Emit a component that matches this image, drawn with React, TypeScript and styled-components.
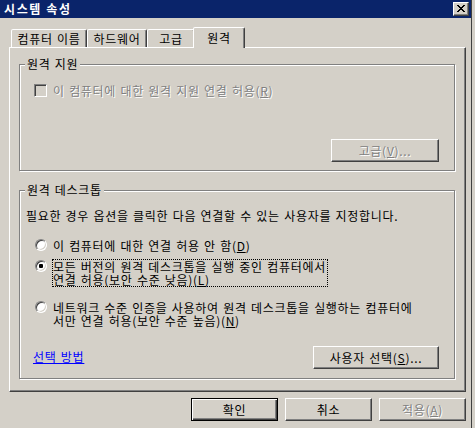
import React from "react";
import styled, { createGlobalStyle, css } from "styled-components";

const FACE = "#d4d0c8";
const FONT = `"Noto Sans CJK KR", "Noto Sans", sans-serif`;

const Global = createGlobalStyle`
  html, body { margin: 0; padding: 0; background: ${FACE}; }
  body { font-family: ${FONT}; font-size: 12px; color: #000; overflow: hidden; word-spacing: 1px; letter-spacing: 0.7px; }
  * { box-sizing: border-box; }
  u { text-decoration-thickness: 1px; text-underline-offset: 1px; }
`;

const Window = styled.div`
  width: 472px;
  height: 428px;
  border-right: 1px solid #404040;
  display: flex;
  flex-direction: column;
  background: ${FACE};
`;

const TitleBar = styled.div`
  height: 18px;
  flex: none;
  background: #0a246a;
  display: flex;
  align-items: center;
  justify-content: space-between;
  padding: 0 2px 0 4px;
`;

const TitleText = styled.span`
  color: #fff;
  font-weight: bold;
  font-size: 12px;
  line-height: 18px;
  letter-spacing: 1.6px;
  word-spacing: 0;
`;

const CloseButton = styled.div`
  width: 16px;
  height: 14px;
  background: ${FACE};
  border: 1px solid;
  border-color: #fff #404040 #404040 #fff;
  box-shadow: inset -1px -1px #808080;
  display: flex;
  align-items: center;
  justify-content: center;
  padding: 0 1px 1px 0;
`;

const Body = styled.div`
  flex: 1;
  display: flex;
  flex-direction: column;
  padding: 9px 5px 0 9px;
`;

const TabStrip = styled.div`
  display: flex;
  align-items: flex-end;
  height: 20px;
  padding-left: 2px;
`;

const Tab = styled.div<{ $active?: boolean; $w: number }>`
  width: ${(p) => p.$w}px;
  height: 18px;
  display: flex;
  align-items: center;
  justify-content: center;
  border-style: solid;
  border-width: 1px 1px 0 1px;
  border-color: #fff #404040 transparent #fff;
  border-radius: 2px 2px 0 0;
  box-shadow: inset -1px 0 #808080;
  background: ${FACE};
  line-height: 13px;
  white-space: nowrap;
  ${(p) =>
    p.$active &&
    css`
      width: ${p.$w + 4}px;
      height: 21px;
      margin: 0 -2px -1px;
      position: relative;
      z-index: 1;
      padding-bottom: 2px;
    `}
`;

const Panel = styled.div`
  height: 345px;
  border: 1px solid;
  border-color: #fff #404040 #404040 #fff;
  box-shadow: inset -1px -1px #808080;
  padding: 16px 10px 0 9px;
  display: flex;
  flex-direction: column;
`;

const Group = styled.div<{ $h: number; $gap?: number }>`
  height: ${(p) => p.$h}px;
  margin-top: ${(p) => p.$gap ?? 0}px;
  border: 1px solid #808080;
  box-shadow: inset 1px 1px #fff, 1px 1px #fff;
  display: flex;
  flex-direction: column;
  align-items: flex-start;
`;

const GroupTitle = styled.div`
  margin: -8px 0 0 5px;
  padding: 0 2px;
  background: ${FACE};
  line-height: 14px;
  height: 14px;
  white-space: nowrap;
`;

const Row = styled.div<{ $top: number; $left: number }>`
  display: flex;
  align-items: flex-start;
  gap: 5px;
  margin-top: ${(p) => p.$top}px;
  margin-left: ${(p) => p.$left}px;
`;

const Text = styled.div<{ $top: number; $left: number }>`
  margin-top: ${(p) => p.$top}px;
  margin-left: ${(p) => p.$left}px;
  line-height: 13px;
  white-space: nowrap;
`;

const Label = styled.div<{ $focus?: boolean; $disabled?: boolean }>`
  line-height: 13px;
  border: 1px dotted ${(p) => (p.$focus ? "#000" : "transparent")};
  white-space: nowrap;
  padding-right: 1px;
  ${(p) =>
    p.$disabled &&
    css`
      color: #808080;
      text-shadow: 1px 1px 0 #fff;
    `}
`;

const CheckBox = styled.span`
  flex: none;
  width: 13px;
  height: 13px;
  border: 1px solid;
  border-color: #808080 #fff #fff #808080;
  box-shadow: inset 1px 1px #404040, inset -1px -1px ${FACE};
  background: ${FACE};
  margin-top: 1px;
`;

const Radio = styled.span<{ $checked?: boolean }>`
  flex: none;
  width: 12px;
  height: 12px;
  margin-top: 1px;
  border-radius: 50%;
  border: 1px solid;
  border-color: #808080 #fff #fff #808080;
  box-shadow: inset 1px 1px #404040, inset -1px -1px ${FACE};
  background: #fff;
  display: flex;
  align-items: center;
  justify-content: center;
  &::after {
    content: "";
    width: 4px;
    height: 4px;
    border-radius: 1px;
    background: ${(p) => (p.$checked ? "#000" : "transparent")};
  }
`;

const Button = styled.button<{ $w: number; $primary?: boolean }>`
  width: ${(p) => p.$w}px;
  height: 23px;
  flex: none;
  padding: 0;
  font-family: ${FONT};
  font-size: 12px;
  line-height: 13px;
  word-spacing: 1px;
  letter-spacing: 0.7px;
  background: ${FACE};
  color: #000;
  border: 1px solid;
  border-color: #fff #404040 #404040 #fff;
  box-shadow: inset -1px -1px #808080;
  ${(p) =>
    p.$primary &&
    css`
      border-color: #000;
      box-shadow: inset 1px 1px #fff, inset -1px -1px #404040, inset -2px -2px #808080;
    `}
  &:disabled {
    color: #808080;
    text-shadow: 1px 1px 0 #fff;
  }
`;

const GroupFooter = styled.div<{ $left: number; $bottom: number }>`
  margin-top: auto;
  margin-bottom: ${(p) => p.$bottom}px;
  margin-left: ${(p) => p.$left}px;
  align-self: stretch;
  padding-right: 15px;
  display: flex;
  align-items: center;
  justify-content: space-between;
`;

const Link = styled.a`
  color: #0000ff;
  text-decoration: underline;
  text-underline-offset: 1px;
  line-height: 13px;
  margin-top: -3px;
  cursor: pointer;
`;

const ButtonBar = styled.div`
  margin-top: 6px;
  display: flex;
  justify-content: flex-end;
  gap: 7px;
`;

const Spacer = styled.span``;

const xPath = (() => {
  const rows: [number, number][][] = [
    [[0, 2], [6, 2]],
    [[1, 2], [5, 2]],
    [[2, 4]],
    [[3, 2]],
    [[2, 4]],
    [[1, 2], [5, 2]],
    [[0, 2], [6, 2]],
  ];
  return rows
    .map((r, y) => r.map(([x, w]) => `M${x} ${y}h${w}v1h-${w}z`).join(""))
    .join("");
})();

export default function App() {
  return (
    <>
      <Global />
      <Window>
        <TitleBar>
          <TitleText>시스템 속성</TitleText>
          <CloseButton>
            <svg width="8" height="7" viewBox="0 0 8 7" shapeRendering="crispEdges">
              <path d={xPath} fill="#000" />
            </svg>
          </CloseButton>
        </TitleBar>
        <Body>
          <TabStrip>
            <Tab $w={76}>컴퓨터 이름</Tab>
            <Tab $w={60}>하드웨어</Tab>
            <Tab $w={48}>고급</Tab>
            <Tab $w={48} $active>
              원격
            </Tab>
          </TabStrip>
          <Panel>
            <Group $h={107}>
              <GroupTitle>원격 지원</GroupTitle>
              <Row $top={12} $left={14}>
                <CheckBox />
                <Label $disabled>
                  이 컴퓨터에 대한 원격 지원 연결 허용(<u>R</u>)
                </Label>
              </Row>
              <GroupFooter $left={0} $bottom={8}>
                <Spacer />
                <Button $w={108} disabled>
                  고급(<u>V</u>)...
                </Button>
              </GroupFooter>
            </Group>
            <Group $h={189} $gap={19}>
              <GroupTitle>원격 데스크톱</GroupTitle>
              <Text $top={12} $left={6}>
                필요한 경우 옵션을 클릭한 다음 연결할 수 있는 사용자를 지정합니다.
              </Text>
              <Row $top={16} $left={15}>
                <Radio />
                <Label>
                  이 컴퓨터에 대한 연결 허용 안 함(<u>D</u>)
                </Label>
              </Row>
              <Row $top={6} $left={15}>
                <Radio $checked />
                <Label $focus>
                  모든 버전의 원격 데스크톱을 실행 중인 컴퓨터에서
                  <br />
                  연결 허용(보안 수준 낮음)(<u>L</u>)
                </Label>
              </Row>
              <Row $top={13} $left={15}>
                <Radio />
                <Label>
                  네트워크 수준 인증을 사용하여 원격 데스크톱을 실행하는 컴퓨터에
                  <br />
                  서만 연결 허용(보안 수준 높음)(<u>N</u>)
                </Label>
              </Row>
              <GroupFooter $left={13} $bottom={9}>
                <Link>선택 방법</Link>
                <Button $w={126}>
                  사용자 선택(<u>S</u>)...
                </Button>
              </GroupFooter>
            </Group>
          </Panel>
          <ButtonBar>
            <Button $w={87} $primary>
              확인
            </Button>
            <Button $w={87}>취소</Button>
            <Button $w={87} disabled>
              적용(<u>A</u>)
            </Button>
          </ButtonBar>
        </Body>
      </Window>
    </>
  );
}
